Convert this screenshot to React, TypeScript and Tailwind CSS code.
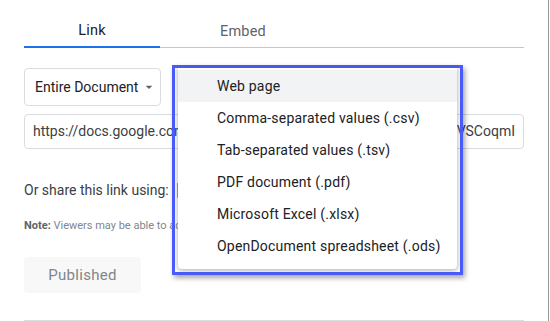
import React from 'react';

const formats = [
  'Web page',
  'Comma-separated values (.csv)',
  'Tab-separated values (.tsv)',
  'PDF document (.pdf)',
  'Microsoft Excel (.xlsx)',
  'OpenDocument spreadsheet (.ods)',
];

const App = () => {
  return (
    <div className="relative h-[321px] w-[550px] overflow-hidden bg-white font-['Roboto',sans-serif]">
      <div className="h-[321px] w-[549px] border-r border-[#9a9a9a]">
        <div className="w-[500px] ml-[24px]">
          {/* tabs */}
          <div className="flex h-[48px]">
            <div className="flex h-[48px] w-[136px] items-center justify-center border-b-2 border-[#1a73e8] pt-[16px] text-[14.5px] tracking-[0.2px] text-[#202124]">
              Link
            </div>
            <div className="flex h-[48px] w-[166px] items-center justify-center border-b border-[#c6c6c6] pt-[17px] text-[14.5px] tracking-[0.2px] text-[#5f6368]">
              Embed
            </div>
            <div className="h-[48px] flex-1 border-b border-[#c6c6c6]" />
          </div>

          {/* document select */}
          <div className="mt-[20px] flex h-[38px] w-[137px] items-center rounded-[4px] border border-[#dadce0] pl-[10px] text-[14px] text-[#202124]">
            <span>Entire Document</span>
            <svg className="ml-[3px] h-4 w-4" viewBox="0 0 24 24">
              <path d="M7 10l5 5 5-5z" fill="#5f6368" />
            </svg>
          </div>

          {/* link field */}
          <div className="mt-[8px] flex h-[35px] items-center rounded-[4px] border border-[#dadce0] pl-[8px] pr-[8px] text-[14px] text-[#3c4043] whitespace-nowrap">
            <span className="min-w-0 flex-1 overflow-hidden">
              https://docs.google.com/spreadsheets/d/e/2PACX-1vQ8kLx2pTnUuM0
            </span>
            <span className="shrink-0">VSCoqmI</span>
          </div>

          {/* share */}
          <div className="mt-[25px] flex h-[32px] items-center text-[14px] text-[#3c4043]">
            <span>Or share this link using:</span>
            <svg className="ml-[8px] h-[16px] w-[22px]" viewBox="0 0 22 16">
              <path d="M1 2h20v13H1z" fill="none" stroke="#e0877d" strokeWidth="2" />
              <path d="M1 2l10 7 10-7" fill="none" stroke="#d93025" strokeWidth="2" />
            </svg>
          </div>

          {/* note */}
          <div className="mt-[12px] h-[16px] whitespace-nowrap text-[11px] leading-[16px] text-[#80868b]">
            <span className="font-bold text-[#5f6368]">Note:</span> Viewers may be able to access the underlying data of published charts and see
          </div>

          {/* published */}
          <div className="mt-[23px] flex h-[36px] w-[117px] items-center justify-center rounded-[4px] bg-[#f8f8f8] text-[15px] tracking-[0.3px] text-[#80868b]">
            Published
          </div>

          <div className="mt-[27px] border-t border-[#dadce0]" />
        </div>
      </div>

      {/* format menu, outlined */}
      <div className="absolute left-[172px] top-[65px] h-[210px] w-[291px] border-[3px] border-[#4a5cff] px-[3px] pb-[3px] shadow-[2px_3px_5px_rgba(0,0,0,0.35)]">
        <div className="h-full rounded-b-[4px] bg-white pt-[2px] shadow-[0_1px_4px_1px_rgba(60,64,67,0.35)]">
          {formats.map((label, index) => (
            <div
              key={index}
              className={
                index === 0
                  ? 'flex h-[32px] items-center bg-[#f1f3f4] pl-[39px] text-[14px] tracking-[0.2px] text-[#202124]'
                  : 'flex h-[32px] items-center pl-[39px] text-[14px] tracking-[0.2px] text-[#202124]'
              }
            >
              {label}
            </div>
          ))}
        </div>
      </div>
    </div>
  );
};

export default App;
